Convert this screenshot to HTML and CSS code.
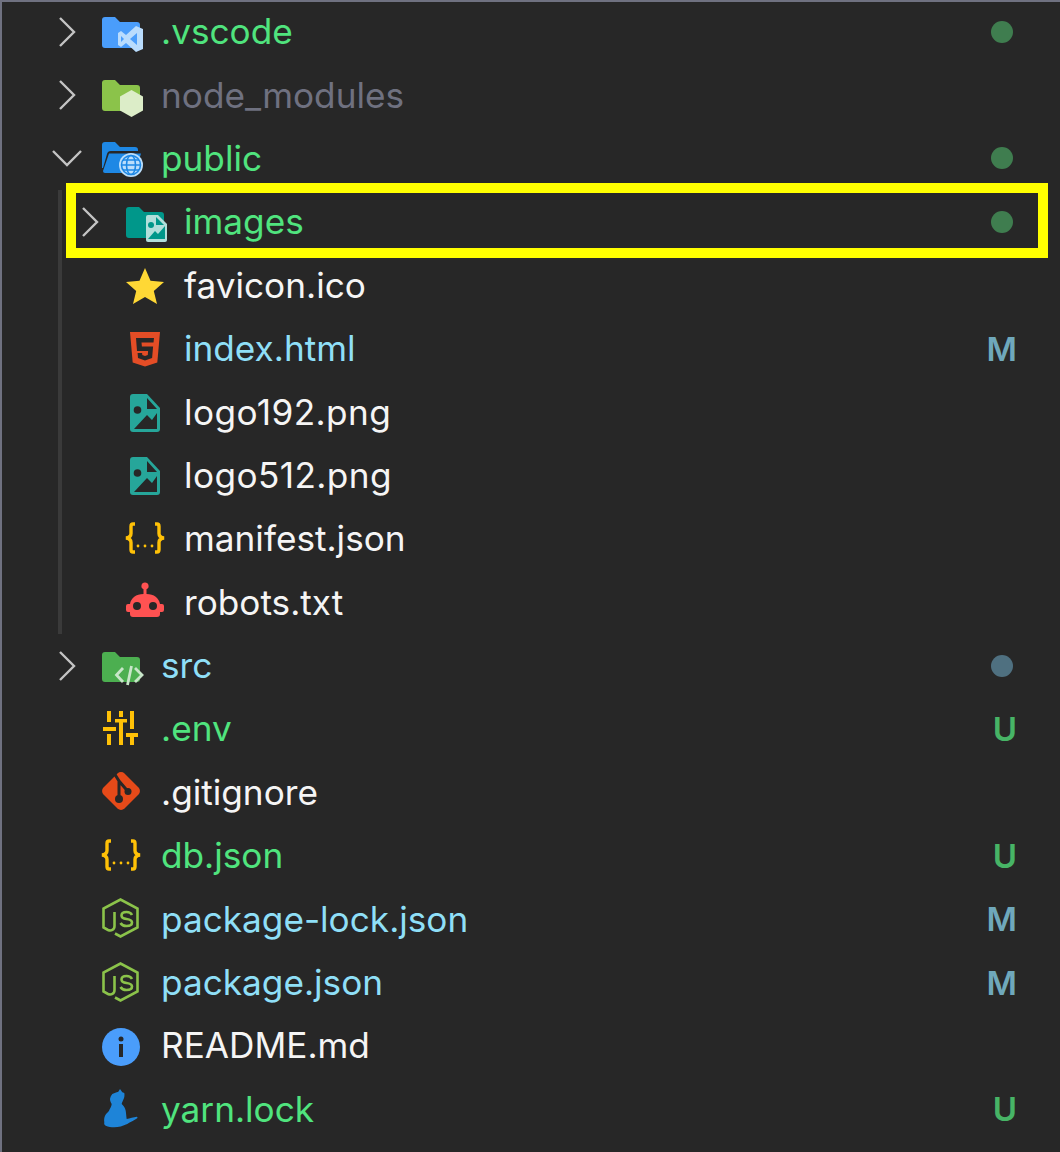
FILE: index.html
```html
<!DOCTYPE html>
<html lang="en">
<head>
	<meta charset="UTF-8">
	<title>explorer</title>
	<link rel="stylesheet" href="styles.css">
</head>
<body>
	<div class="tree">
		<div class="row">
			<svg class="twistie" viewBox="0 0 34 34"><path d="M10 3l14 14L10 31"/></svg>
			<svg class="icon" viewBox="0 0 42 42"><path fill="#4a9dfb" d="M2 9a3 3 0 0 1 3-3h10l5 5h17a3 3 0 0 1 3 3v20a3 3 0 0 1-3 3H5a3 3 0 0 1-3-3z"/><path fill="#b9dcfd" fill-rule="evenodd" d="M36 15l7 3v20l-7 3-10-9-5 4-3-2V22l3-2 5 4zM37 22l-7 6 7 6z"/><path fill="#4a9dfb" d="M21 25v6l3-3z"/></svg>
			<span class="name added">.vscode</span>
			<span class="dot"></span>
		</div>
		<div class="row">
			<svg class="twistie" viewBox="0 0 34 34"><path d="M10 3l14 14L10 31"/></svg>
			<svg class="icon" viewBox="0 0 42 42"><path fill="#8bc34a" d="M2 9a3 3 0 0 1 3-3h10l5 5h17a3 3 0 0 1 3 3v20a3 3 0 0 1-3 3H5a3 3 0 0 1-3-3z"/><path fill="#dcedc8" d="M31.500 16L43 22.500v14L31.500 43 20 36.500v-14z"/></svg>
			<span class="name ignored">node_modules</span>
		</div>
		<div class="row">
			<svg class="twistie" viewBox="0 0 34 34"><path d="M3 10l14 14 14-14"/></svg>
			<svg class="icon" viewBox="0 0 42 42"><path fill="#1e88e5" d="M2 8a3 3 0 0 1 3-3h10l5 5h15a3 3 0 0 1 3 3v1H11a4 4 0 0 0-4 3L3 31H2z"/><path fill="#1e88e5" d="M9 16.500h32L35 36H5a2 2 0 0 1-2-2z"/><circle cx="31" cy="28" r="12" fill="#bbdefb"/><g fill="none" stroke="#1e88e5" stroke-width="1.600"><circle cx="31" cy="28" r="9.500"/><ellipse cx="31" cy="28" rx="4.500" ry="9.500"/><path d="M21.500 28h19M23 23h16M23 33h16"/></g></svg>
			<span class="name added">public</span>
			<span class="dot"></span>
		</div>
		<div class="children">
			<div class="row">
				<svg class="twistie" viewBox="0 0 34 34"><path d="M10 3l14 14L10 31"/></svg>
				<svg class="icon" viewBox="0 0 42 42"><path fill="#00978a" d="M2 9a3 3 0 0 1 3-3h10l5 5h17a3 3 0 0 1 3 3v20a3 3 0 0 1-3 3H5a3 3 0 0 1-3-3z"/><path fill="#b2dfdb" d="M24 14h10l9 9v16a2 2 0 0 1-2 2H24a2 2 0 0 1-2-2V16a2 2 0 0 1 2-2z"/><path fill="#00978a" d="M32 16v8h8zM24 38l7-8 3 3 7-8v13z"/><circle cx="27" cy="24" r="3" fill="#00978a"/></svg>
				<span class="name added">images</span>
				<span class="dot"></span>
				<div class="highlight"></div>
			</div>
			<div class="row">
				<span class="twistie"></span>
				<svg class="icon" viewBox="0 0 42 42"><path fill="#ffd835" d="M21 4l5.500 12.800L40 18l-10.200 9L33 40l-12-7-12 7 3.200-13L2 18l13.500-1.200z"/></svg>
				<span class="name">favicon.ico</span>
			</div>
			<div class="row">
				<span class="twistie"></span>
				<svg class="icon" viewBox="0 0 42 42"><path fill="#e44d26" d="M6 4h30l-2.700 30.500L21 38.500 8.700 34.500z"/><path fill="#272727" d="M12 10h18l-.5 4.500H17.500l.4 4h11.200l-1 11.500L21 32.500l-7-2.500-.4-5h4.500l.2 2 2.700.9 2.800-.9.300-4H13z"/></svg>
				<span class="name modified">index.html</span>
				<span class="badge m">M</span>
			</div>
			<div class="row">
				<span class="twistie"></span>
				<svg class="icon" viewBox="0 0 42 42"><path fill="#26a69a" d="M9 3h14l13 14v21a3 3 0 0 1-3 3H9a3 3 0 0 1-3-3V6a3 3 0 0 1 3-3z"/><path fill="#272727" d="M23 7v11h10zM10 38l13-14 5 5 5-7v16z"/><circle cx="13.500" cy="19" r="3.800" fill="#272727"/></svg>
				<span class="name digits">logo192.png</span>
			</div>
			<div class="row">
				<span class="twistie"></span>
				<svg class="icon" viewBox="0 0 42 42"><path fill="#26a69a" d="M9 3h14l13 14v21a3 3 0 0 1-3 3H9a3 3 0 0 1-3-3V6a3 3 0 0 1 3-3z"/><path fill="#272727" d="M23 7v11h10zM10 38l13-14 5 5 5-7v16z"/><circle cx="13.500" cy="19" r="3.800" fill="#272727"/></svg>
				<span class="name digits">logo512.png</span>
			</div>
			<div class="row">
				<span class="twistie"></span>
				<svg class="icon" viewBox="0 0 42 42"><g fill="none" stroke="#ffc107" stroke-width="3.400"><path d="M11 6H9C7.500 6 7 7 7 8.500v7c0 2-1.500 4-5 4.500 3.500.5 5 2.500 5 4.500v7C7 33 7.500 34 9 34h2"/><path d="M31 6h2c1.500 0 2 1 2 2.500v7c0 2 1.500 4 5 4.500-3.500.5-5 2.500-5 4.500v7c0 1.500-.5 2.500-2 2.500h-2"/></g><g fill="#ffc107"><circle cx="14" cy="28" r="1.400"/><circle cx="21" cy="28" r="1.400"/><circle cx="28" cy="28" r="1.400"/></g></svg>
				<span class="name">manifest.json</span>
			</div>
			<div class="row">
				<span class="twistie"></span>
				<svg class="icon" viewBox="0 0 42 42"><path fill="#ff5252" d="M21 1.500a3.500 3.500 0 0 1 1.500 6.700V13C30 13 35 17 36 23h2a2 2 0 0 1 2 2v4a2 2 0 0 1-2 2h-2v2a3 3 0 0 1-3 3H9a3 3 0 0 1-3-3v-2H4a2 2 0 0 1-2-2v-4a2 2 0 0 1 2-2h2C7 17 12 13 19.500 13V8.200A3.500 3.500 0 0 1 21 1.500z"/><circle cx="13" cy="25" r="4" fill="#272727"/><circle cx="29" cy="25" r="4" fill="#272727"/></svg>
				<span class="name">robots.txt</span>
			</div>
		</div>
		<div class="row">
			<svg class="twistie" viewBox="0 0 34 34"><path d="M10 3l14 14L10 31"/></svg>
			<svg class="icon" viewBox="0 0 42 42"><path fill="#4caf50" d="M2 10a3 3 0 0 1 3-3h10l5 5h17a3 3 0 0 1 3 3v19a3 3 0 0 1-3 3H5a3 3 0 0 1-3-3z"/><g fill="none" stroke="#c8e6c9" stroke-width="2.800"><path d="M23 23l-6.500 7 6.500 7M35 23l7 7-7 7M31.500 21L27.500 40"/></g></svg>
			<span class="name modified">src</span>
			<span class="dot blue"></span>
		</div>
		<div class="row">
			<span class="twistie"></span>
			<svg class="icon" viewBox="0 0 42 42"><path fill="#ffc107" d="M7 3h4v11H7zM3 19h13v4H3zM7 26h4v11H7zM19 3h4v6h-4zM15 11h12v3.500H15zM19 14h4v23h-4zM30 3h4v18h-4zM26 25h12v4H26zM30 29h4v8h-4z"/></svg>
			<span class="name added">.env</span>
			<span class="badge u">U</span>
		</div>
		<div class="row">
			<span class="twistie"></span>
			<svg class="icon" viewBox="0 0 42 42"><path fill="#e64a19" d="M17.500 2.500a5 5 0 0 1 7 0l14 14a5 5 0 0 1 0 7l-14 14a5 5 0 0 1-7 0l-14-14a5 5 0 0 1 0-7z"/><g fill="#272727"><circle cx="19" cy="28" r="4"/><circle cx="28" cy="20.500" r="3.500"/></g><path fill="none" stroke="#272727" stroke-width="3" d="M14 2l5 8v18M19 10l9 10.500"/></svg>
			<span class="name">.gitignore</span>
		</div>
		<div class="row">
			<span class="twistie"></span>
			<svg class="icon" viewBox="0 0 42 42"><g fill="none" stroke="#ffc107" stroke-width="3.400"><path d="M11 6H9C7.500 6 7 7 7 8.500v7c0 2-1.500 4-5 4.500 3.500.5 5 2.500 5 4.500v7C7 33 7.500 34 9 34h2"/><path d="M31 6h2c1.500 0 2 1 2 2.500v7c0 2 1.500 4 5 4.500-3.500.5-5 2.500-5 4.500v7c0 1.500-.5 2.500-2 2.500h-2"/></g><g fill="#ffc107"><circle cx="14" cy="28" r="1.400"/><circle cx="21" cy="28" r="1.400"/><circle cx="28" cy="28" r="1.400"/></g></svg>
			<span class="name added">db.json</span>
			<span class="badge u">U</span>
		</div>
		<div class="row">
			<span class="twistie"></span>
			<svg class="icon" viewBox="0 0 42 42"><g fill="none" stroke="#8bc34a" stroke-width="2.600"><path d="M15 35.500l5.500 3 17-9v-19l-17-9-17 9v19l4.500 2.500c3 1.200 6.500 0 6.500-4V14"/><path d="M32 17c-1-2-3-3-5.500-3-3 0-5 1.200-5 3.500 0 2 1.500 3 5 3.500 3.500.5 5.500 1.500 5.500 3.500 0 2.500-2 3.500-5.500 3.500-3 0-5-1.200-6-3"/></g></svg>
			<span class="name modified">package-lock.json</span>
			<span class="badge m">M</span>
		</div>
		<div class="row">
			<span class="twistie"></span>
			<svg class="icon" viewBox="0 0 42 42"><g fill="none" stroke="#8bc34a" stroke-width="2.600"><path d="M15 35.500l5.500 3 17-9v-19l-17-9-17 9v19l4.500 2.500c3 1.200 6.500 0 6.500-4V14"/><path d="M32 17c-1-2-3-3-5.500-3-3 0-5 1.200-5 3.500 0 2 1.500 3 5 3.500 3.500.5 5.500 1.500 5.500 3.500 0 2.500-2 3.500-5.500 3.500-3 0-5-1.200-6-3"/></g></svg>
			<span class="name modified">package.json</span>
			<span class="badge m">M</span>
		</div>
		<div class="row">
			<span class="twistie"></span>
			<svg class="icon" viewBox="0 0 42 42"><circle cx="21" cy="22" r="19" fill="#4a9dfb"/><path fill="#272727" d="M19 19h4v13h-4z"/><circle cx="21" cy="14" r="2.500" fill="#272727"/></svg>
			<span class="name">README.md</span>
		</div>
		<div class="row">
			<span class="twistie"></span>
			<svg class="icon" viewBox="0 0 42 42"><path fill="#1e84d8" d="M20 1l2.300 3.300 2 .7c.5 2.500 0 5-1 6.700-.5 1.500-1.500 3-1.600 4.300 2 2 3.500 4 4 6.700.5 3 .5 5.500 1 8.300 3-.5 7-2 10-2.300.8 0 1 1 .5 1.600-3 2-7 4-10 5.700-4 2-9 3.300-13 3.300-3 0-6-.7-8.500-1.600C4.200 37 4 35.500 4.300 34.300 4 32 4 30 5 27.700c1-2 3-3.500 4-5 1-2 2.500-4.500 2.700-6.700-1-1.500-1.700-3.500-1.700-5 .5-2 1-3.500 2.300-5 2-1 4-1.500 6-2.300z"/></svg>
			<span class="name added">yarn.lock</span>
			<span class="badge u">U</span>
		</div>
	</div>
</body>
</html>
```
FILE: styles.css
```css
html, body {
	margin: 0;
	padding: 0;
	background: #272727;
}
.tree {
	width: 1060px;
	height: 1152px;
	background: #272727;
	box-shadow: inset 2px 2px 0 #6f7180;
	font-family: Inter, "Liberation Sans", sans-serif;
	font-size: 35.2px;
	font-weight: 420;
	color: #f5f5f5;
	overflow: hidden;
}
.row {
	height: 63.4px;
	display: flex;
	align-items: center;
	padding-left: 50px;
	position: relative;
}
.children {
	margin-left: 58px;
	border-left: 4px solid #3a3a3a;
}
.children .row {
	padding-left: 11px;
}
.children .icon {
	margin-left: 1px;
	margin-right: 18px;
}
.twistie {
	width: 34px;
	height: 34px;
	flex: none;
	margin-right: 16px;
	fill: none;
	stroke: #c4c4c4;
	stroke-width: 2.4;
}
.icon {
	width: 42px;
	height: 42px;
	flex: none;
	margin-right: 19px;
	overflow: visible;
}
.name {
	flex: 1;
	white-space: nowrap;
	padding-bottom: 1px;
}
.digits {
	letter-spacing: .4px;
}
.added {
	color: #50e47e;
}
.modified {
	color: #8fdff7;
}
.ignored {
	color: #6f7180;
}
.dot {
	width: 22px;
	height: 22px;
	border-radius: 50%;
	background: #3f7d4f;
	margin-right: 47px;
	flex: none;
}
.dot.blue {
	background: #4f7080;
}
.badge {
	font-weight: 600;
	font-size: 33px;
	margin-right: 43px;
}
.badge.m {
	color: #6fa8bb;
}
.badge.u {
	color: #47b466;
}
.highlight {
	position: absolute;
	left: 4px;
	right: 12px;
	top: -7px;
	height: 55px;
	border: 10px solid #ffff00;
}
```
